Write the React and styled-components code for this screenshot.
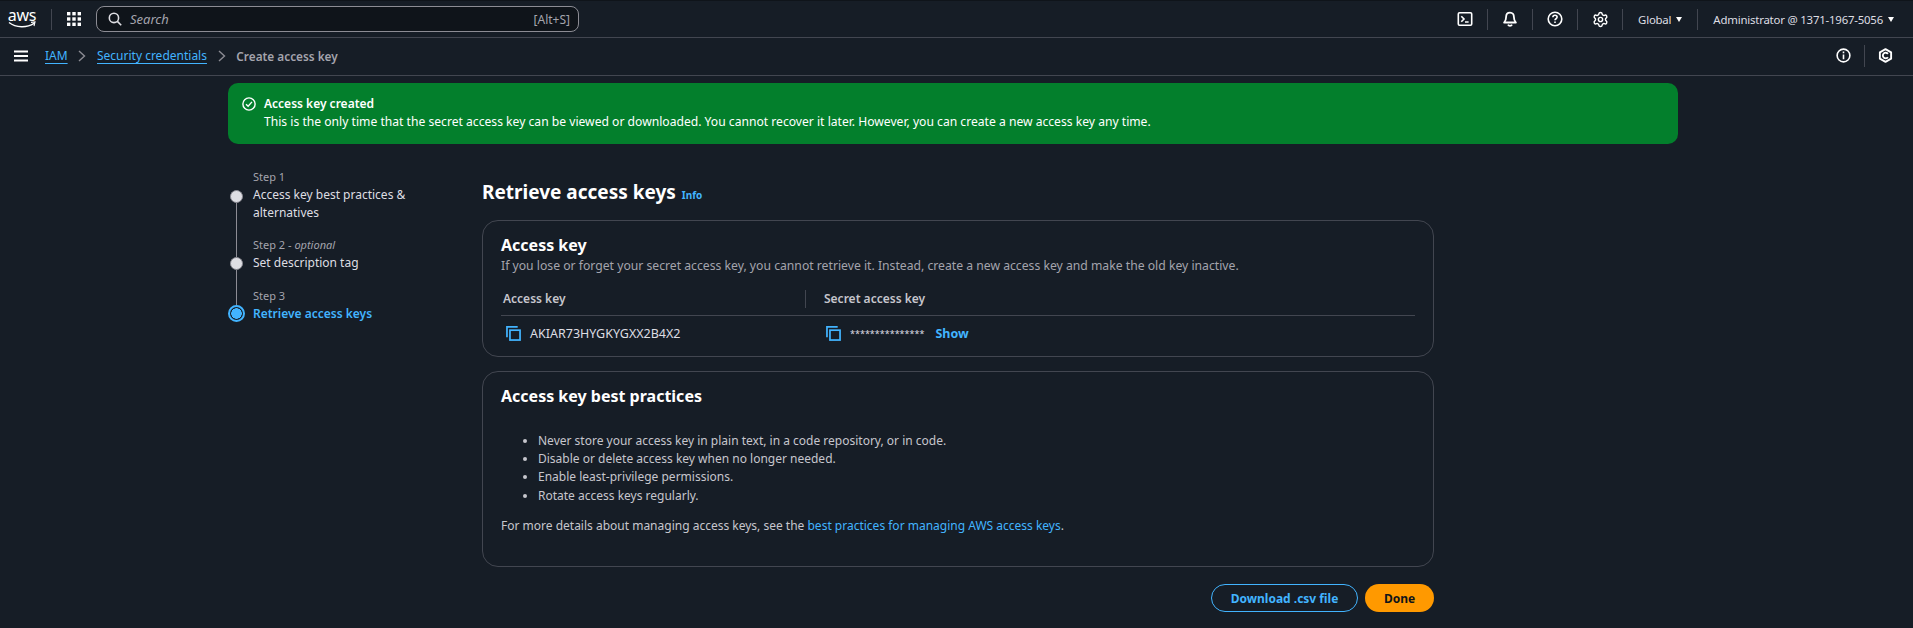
import React from "react";
import styled, { createGlobalStyle } from "styled-components";
import { Settings } from "lucide-react";

const GlobalStyle = createGlobalStyle`
  html, body {
    margin: 0;
    padding: 0;
    background: #161d26;
    color: #dedee3;
    font-family: "Noto Sans", "Open Sans", sans-serif;
    font-size: 12px;
    overflow: hidden;
  }
  * { box-sizing: border-box; }
`;

function CloudShellIcon() {
  return (
    <svg width="16" height="16" viewBox="0 0 16 16" fill="none" stroke="#fff" strokeWidth="1.6">
      <rect x="1.3" y="1.8" width="13.4" height="12.4" rx="1.2" />
      <path d="M4.3 5.2 7 8 4.3 10.8M8 11h3.6" />
    </svg>
  );
}

function BellIcon() {
  return (
    <svg width="16" height="16" viewBox="0 0 16 16" fill="none" stroke="#fff" strokeWidth="1.8" strokeLinejoin="round">
      <path d="M8 1.6c-2.6 0-3.9 1.9-3.9 4.3 0 2.6-.5 4-2 5.6h11.8c-1.5-1.6-2-3-2-5.6 0-2.4-1.3-4.3-3.9-4.3Z" />
      <path d="M6 13.6c.4.9 1.1 1.3 2 1.3s1.6-.4 2-1.3" />
    </svg>
  );
}

function HelpIcon() {
  return (
    <svg width="16" height="16" viewBox="0 0 16 16" fill="none" stroke="#fff" strokeWidth="1.6">
      <circle cx="8" cy="8" r="6.8" />
      <path d="M5.9 6.2c0-1.2.9-1.9 2.1-1.9s2.1.7 2.1 1.8c0 1.7-2.1 1.6-2.1 3.2" />
      <path d="M8 10.6v1.5" />
    </svg>
  );
}

function InfoIcon() {
  return (
    <svg width="15" height="15" viewBox="0 0 16 16" fill="none" stroke="#fff" strokeWidth="1.7">
      <circle cx="8" cy="8" r="6.8" />
      <path d="M8 7v5M8 3.8v1.8" />
    </svg>
  );
}

function HexIcon() {
  return (
    <svg width="15" height="15" viewBox="0 0 16 16" fill="none" stroke="#fff" strokeWidth="2" strokeLinejoin="round">
      <path d="M8 1.2 14 4.6v6.8L8 14.8 2 11.4V4.6Z" />
      <path d="M10.6 6.2A3 3 0 1 0 10.6 9.8" />
    </svg>
  );
}

function SearchIcon() {
  return (
    <svg width="14" height="14" viewBox="0 0 16 16" fill="none" stroke="#dedee3" strokeWidth="1.8">
      <circle cx="6.8" cy="6.8" r="5.3" />
      <path d="m10.7 10.7 4.4 4.4" />
    </svg>
  );
}

function GridIcon() {
  return (
    <svg width="14" height="14" viewBox="0 0 14 14" fill="#fff">
      {[0, 5.3, 10.6].map((y) =>
        [0, 5.3, 10.6].map((x) => <rect key={`${x}-${y}`} x={x} y={y} width="3.4" height="3.4" />)
      )}
    </svg>
  );
}

function CopyIcon() {
  return (
    <svg width="15" height="15" viewBox="0 0 14 14" fill="none" stroke="#42b4ff" strokeWidth="1.6">
      <path d="M.9 10.4V.9h10" />
      <rect x="3.7" y="3.9" width="9.4" height="9.2" />
    </svg>
  );
}

function CheckCircleIcon() {
  return (
    <svg width="14" height="14" viewBox="0 0 16 16" fill="none" stroke="#fff" strokeWidth="1.6">
      <circle cx="8" cy="8" r="7" />
      <path d="m4.6 8.2 2.4 2.4 4.4-5" />
    </svg>
  );
}

function Chevron() {
  return (
    <svg width="8" height="12" viewBox="0 0 8 12" fill="none" stroke="#8c8c94" strokeWidth="1.4">
      <path d="m1 1 5.5 5L1 11" />
    </svg>
  );
}

function Hamburger() {
  return (
    <svg width="14" height="12" viewBox="0 0 14 12" fill="none" stroke="#fff" strokeWidth="2">
      <path d="M0 1.5h14M0 6h14M0 10.5h14" />
    </svg>
  );
}

export default function App() {
  return (
    <Page>
      <GlobalStyle />
      <TopBar>
        <Logo>
          <LogoText>aws</LogoText>
          <svg width="28" height="8" viewBox="0 0 28 8" fill="none">
            <path d="M1 1.5C8 7 19 7 26 2.4" stroke="#fff" strokeWidth="1.4" />
            <path d="M23 1.4 27 1l-1 4" stroke="#fff" strokeWidth="1.1" />
          </svg>
        </Logo>
        <TopDivider />
        <GridSlot>
          <GridIcon />
        </GridSlot>
        <SearchBox>
          <SearchIcon />
          <SearchHint>Search</SearchHint>
          <Shortcut>[Alt+S]</Shortcut>
        </SearchBox>
        <TopRight>
          <IconSlot><CloudShellIcon /></IconSlot>
          <TopDivider />
          <IconSlot><BellIcon /></IconSlot>
          <TopDivider />
          <IconSlot><HelpIcon /></IconSlot>
          <TopDivider />
          <IconSlot><Settings size={17} color="#fff" strokeWidth={2} /></IconSlot>
          <TopDivider />
          <MenuLabel $pad={15}>Global <Caret /></MenuLabel>
          <TopDivider />
          <MenuLabel $pad={15}>Administrator @ 1371-1967-5056 <Caret /></MenuLabel>
        </TopRight>
      </TopBar>

      <CrumbBar>
        <MenuButton><Hamburger /></MenuButton>
        <CrumbLink>IAM</CrumbLink>
        <Chevron />
        <CrumbLink>Security credentials</CrumbLink>
        <Chevron />
        <CrumbCurrent>Create access key</CrumbCurrent>
        <CrumbTools>
          <InfoIcon />
          <ToolDivider />
          <HexIcon />
        </CrumbTools>
      </CrumbBar>

      <Banner>
        <BannerIcon><CheckCircleIcon /></BannerIcon>
        <div>
          <BannerTitle>Access key created</BannerTitle>
          <BannerText>
            This is the only time that the secret access key can be viewed or downloaded. You cannot
            recover it later. However, you can create a new access key any time.
          </BannerText>
        </div>
      </Banner>

      <Main>
        <Steps>
          <Step>
            <Rail>
              <RailGap />
              <Dot />
              <RailLine />
            </Rail>
            <StepBody $gap={14}>
              <StepLabel>Step 1</StepLabel>
              <StepTitle>Access key best practices &amp; alternatives</StepTitle>
            </StepBody>
          </Step>
          <Step>
            <Rail>
              <RailLine $fixed={21} />
              <Dot />
              <RailLine />
            </Rail>
            <StepBody $gap={15}>
              <StepLabel>Step 2 - <em>optional</em></StepLabel>
              <StepTitle>Set description tag</StepTitle>
            </StepBody>
          </Step>
          <Step>
            <Rail>
              <RailLine $fixed={18} />
              <ActiveDot />
            </Rail>
            <StepBody>
              <StepLabel>Step 3</StepLabel>
              <StepTitle $active>Retrieve access keys</StepTitle>
            </StepBody>
          </Step>
        </Steps>

        <Content>
          <Heading>
            <H1>Retrieve access keys</H1>
            <InfoLink>Info</InfoLink>
          </Heading>

          <Card>
            <CardTitle>Access key</CardTitle>
            <CardSub>
              If you lose or forget your secret access key, you cannot retrieve it. Instead, create a
              new access key and make the old key inactive.
            </CardSub>
            <KeyTable>
              <KeyHead>
                <HeadCell>Access key</HeadCell>
                <HeadCell $divided>Secret access key</HeadCell>
              </KeyHead>
              <KeyRow>
                <KeyCell>
                  <CopyIcon />
                  <KeyValue>AKIAR73HYGKYGXX2B4X2</KeyValue>
                </KeyCell>
                <KeyCell $second>
                  <CopyIcon />
                  <Masked>***************</Masked>
                  <ShowLink>Show</ShowLink>
                </KeyCell>
              </KeyRow>
            </KeyTable>
          </Card>

          <PracticesCard>
            <CardTitle>Access key best practices</CardTitle>
            <Tips>
              <li>Never store your access key in plain text, in a code repository, or in code.</li>
              <li>Disable or delete access key when no longer needed.</li>
              <li>Enable least-privilege permissions.</li>
              <li>Rotate access keys regularly.</li>
            </Tips>
            <MoreText>
              For more details about managing access keys, see the{" "}
              <TextLink>best practices for managing AWS access keys</TextLink>.
            </MoreText>
          </PracticesCard>

          <Actions>
            <OutlineButton>Download .csv file</OutlineButton>
            <PrimaryButton>Done</PrimaryButton>
          </Actions>
        </Content>
      </Main>
    </Page>
  );
}

const Page = styled.div`
  width: 1913px;
  height: 628px;
  overflow: hidden;
  display: flex;
  flex-direction: column;
  background: #161d26;
`;

const TopBar = styled.header`
  height: 38px;
  flex: none;
  display: flex;
  align-items: center;
  padding: 0 4px 0 8px;
  border-top: 1px solid #0f141a;
  border-bottom: 1px solid #424650;
`;

const Logo = styled.div`
  width: 28px;
  margin-right: 15px;
  display: flex;
  flex-direction: column;
  align-items: center;
`;

const LogoText = styled.span`
  font-size: 16px;
  line-height: 12px;
  color: #fff;
  letter-spacing: -0.2px;
`;

const TopDivider = styled.span`
  width: 1px;
  height: 21px;
  background: #424650;
  flex: none;
`;

const GridSlot = styled.div`
  width: 44px;
  padding-left: 15px;
  display: flex;
`;

const SearchBox = styled.div`
  width: 483px;
  height: 26px;
  display: flex;
  align-items: center;
  padding: 0 8px 0 11px;
  background: #0f141a;
  border: 1px solid #8c8c94;
  border-radius: 8px;
`;

const SearchHint = styled.span`
  font-style: italic;
  color: #a4a4ad;
  margin-left: 8px;
  flex: 1;
  font-size: 13px;
`;

const Shortcut = styled.span`
  color: #a4a4ad;
  font-size: 12px;
`;

const TopRight = styled.div`
  margin-left: auto;
  display: flex;
  align-items: center;
`;

const IconSlot = styled.div`
  width: 44px;
  display: flex;
  justify-content: center;
`;

const MenuLabel = styled.div`
  display: flex;
  align-items: center;
  gap: 5px;
  padding: 0 ${(p) => p.$pad}px;
  font-size: 11.4px;
  letter-spacing: -0.2px;
  color: #dedee3;
`;

const Caret = styled.span`
  width: 0;
  height: 0;
  border-left: 3.5px solid transparent;
  border-right: 3.5px solid transparent;
  border-top: 5px solid #fff;
`;

const CrumbBar = styled.nav`
  height: 38px;
  flex: none;
  display: flex;
  align-items: center;
  gap: 10.7px;
  padding: 0 0 2px 14px;
  border-bottom: 1px solid #424650;
  font-size: 12px;
`;

const MenuButton = styled.div`
  display: flex;
  width: 20.3px;
`;

const CrumbLink = styled.span`
  color: #42b4ff;
  text-decoration: underline;
  text-underline-offset: 3px;
`;

const CrumbCurrent = styled.span`
  color: #a4a4ad;
  font-size: 11.8px;
  font-weight: 600;
`;

const CrumbTools = styled.div`
  margin-left: auto;
  display: flex;
  align-items: center;
  gap: 13px;
  padding-right: 20px;
`;

const ToolDivider = styled.span`
  width: 1px;
  height: 22px;
  background: #424650;
`;

const Banner = styled.section`
  width: 1450px;
  height: 61px;
  flex: none;
  margin: 7px 0 0 228px;
  padding: 12px 14px;
  display: flex;
  gap: 8px;
  background: #037f2c;
  border-radius: 10px;
  color: #fff;
  font-size: 12.13px;
  line-height: 18px;
`;

const BannerIcon = styled.div`
  display: flex;
  padding-top: 2px;
`;

const BannerTitle = styled.div`
  font-weight: 600;
  font-size: 12px;
`;

const BannerText = styled.div``;

const Main = styled.main`
  display: flex;
  margin-left: 228px;
`;

const Steps = styled.ol`
  width: 254px;
  flex: none;
  list-style: none;
  margin: 0;
  padding: 24px 0 0 0;
`;

const Step = styled.li`
  display: flex;
  gap: 8px;
`;

const Rail = styled.div`
  width: 17px;
  flex: none;
  display: flex;
  flex-direction: column;
  align-items: center;
`;

const RailGap = styled.span`
  height: 22px;
  flex: none;
`;

const RailLine = styled.span`
  width: 1px;
  background: #8c8c94;
  flex: ${(p) => (p.$fixed ? `0 0 ${p.$fixed}px` : "1")};
`;

const Dot = styled.span`
  width: 13px;
  height: 13px;
  flex: none;
  border-radius: 50%;
  background: #dedee3;
  border: 1px solid #8c8c94;
`;

const ActiveDot = styled.span`
  width: 17px;
  height: 17px;
  flex: none;
  border-radius: 50%;
  border: 2px solid #42b4ff;
  background: radial-gradient(circle, #42b4ff 0 5px, transparent 5.5px);
`;

const StepBody = styled.div`
  width: 170px;
  padding-bottom: ${(p) => p.$gap || 0}px;
`;

const StepLabel = styled.div`
  font-size: 11px;
  line-height: 18px;
  color: #a4a4ad;
`;

const StepTitle = styled.div`
  font-size: 12px;
  line-height: 18px;
  color: ${(p) => (p.$active ? "#42b4ff" : "#dedee3")};
  font-weight: ${(p) => (p.$active ? 600 : 400)};
`;

const Content = styled.div`
  width: 952px;
  flex: none;
  padding-top: 35px;
`;

const Heading = styled.div`
  display: flex;
  align-items: baseline;
  gap: 6px;
  height: 41px;
`;

const H1 = styled.h1`
  margin: 0;
  font-size: 19px;
  line-height: 26px;
  font-weight: 700;
  color: #fff;
`;

const InfoLink = styled.span`
  font-size: 10px;
  font-weight: 700;
  color: #42b4ff;
`;

const Card = styled.section`
  height: 137px;
  padding: 13px 18px 0;
  border: 1px solid #424650;
  border-radius: 16px;
`;

const PracticesCard = styled(Card)`
  height: 196px;
  margin-top: 14px;
`;

const CardTitle = styled.h2`
  margin: 0;
  font-size: 16px;
  line-height: 22px;
  font-weight: 700;
  color: #fff;
`;

const CardSub = styled.p`
  margin: 2px 0 0;
  font-size: 12.2px;
  line-height: 16px;
  color: #a4a4ad;
`;

const KeyTable = styled.div`
  margin-top: 8px;
`;

const KeyHead = styled.div`
  display: grid;
  grid-template-columns: 304px 1fr;
  height: 34px;
  align-items: center;
  border-bottom: 1px solid #424650;
`;

const HeadCell = styled.div`
  font-size: 12px;
  line-height: 18px;
  font-weight: 600;
  color: #c6c6cd;
  padding-left: ${(p) => (p.$divided ? "18px" : "2px")};
  border-left: ${(p) => (p.$divided ? "1px solid #424650" : "none")};
`;

const KeyRow = styled.div`
  display: grid;
  grid-template-columns: 304px 1fr;
  height: 34px;
  align-items: center;
  color: #dedee3;
`;

const KeyCell = styled.div`
  display: flex;
  align-items: center;
  gap: 9px;
  padding-left: ${(p) => (p.$second ? "21px" : "5px")};
`;

const KeyValue = styled.span`
  font-size: 12.5px;
`;

const Masked = styled.span`
  font-size: 9px;
`;

const ShowLink = styled.span`
  font-size: 12.5px;
  font-weight: 700;
  color: #42b4ff;
  margin-left: 2px;
`;

const Tips = styled.ul`
  margin: 25px 0 0;
  padding-left: 37px;
  font-size: 12px;
  line-height: 18.2px;
  color: #c6c6cd;
`;

const MoreText = styled.p`
  margin: 12px 0 0;
  font-size: 12px;
  line-height: 18px;
  color: #c6c6cd;
`;

const TextLink = styled.span`
  color: #42b4ff;
`;

const Actions = styled.div`
  display: flex;
  justify-content: flex-end;
  gap: 7px;
  margin-top: 17px;
`;

const OutlineButton = styled.button`
  width: 147px;
  height: 28px;
  padding: 0;
  border: 1px solid #42b4ff;
  border-radius: 14px;
  background: transparent;
  color: #42b4ff;
  font-family: inherit;
  font-size: 12px;
  font-weight: 700;
`;

const PrimaryButton = styled.button`
  width: 69px;
  height: 28px;
  padding: 0;
  border: none;
  border-radius: 14px;
  background: #ff9900;
  color: #0f141a;
  font-family: inherit;
  font-size: 12px;
  font-weight: 700;
`;
